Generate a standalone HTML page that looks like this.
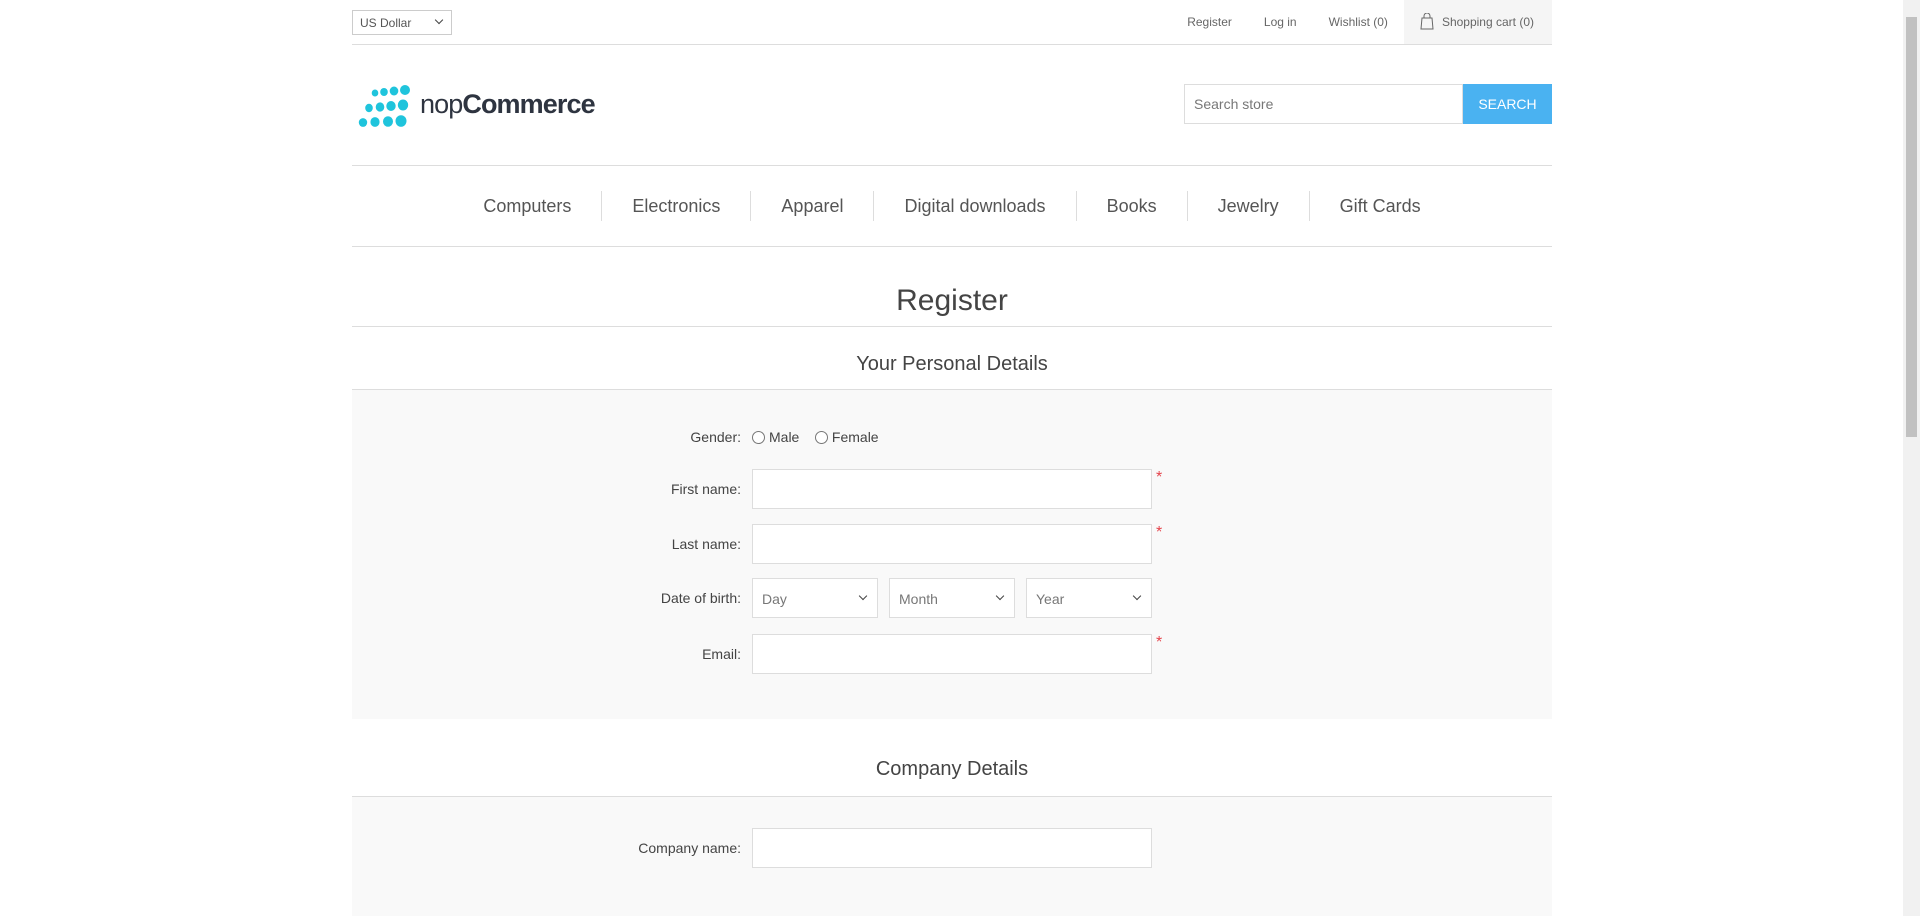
<!DOCTYPE html>
<html><head><meta charset="utf-8"><style>
*{box-sizing:border-box;margin:0;padding:0}
html,body{width:1920px;height:916px;overflow:hidden;background:#fff;font-family:"Liberation Sans",Arial,sans-serif;color:#444}
.sb{position:absolute;right:0;top:0;width:17px;height:916px;background:#f1f1f1}
.sb i{position:absolute;left:3px;top:17px;width:11px;height:420px;background:#c1c1c1}
.wrap{position:absolute;left:352px;width:1200px;top:0;height:916px;overflow:hidden}
.top{height:45px;border-bottom:1px solid #ddd;position:relative}
.cur{position:absolute;left:0;top:10px;width:100px;height:25px;border:1px solid #ccc;font-size:12px;padding:5px 7px;color:#555}
.cur:after{content:"";position:absolute;right:9px;top:6px;width:5px;height:5px;border-right:1.5px solid #444;border-bottom:1.5px solid #444;transform:rotate(45deg)}
.links{position:absolute;right:0;top:0;height:44px;font-size:12px;color:#666;display:flex}
.links span{line-height:44px;margin-left:32px}
.cart{background:#f5f5f5;padding:0 18px 0 38px;position:relative;margin-left:16px!important}
.cart svg{position:absolute;left:16px;top:13px}
.hdr{height:121px;border-bottom:1px solid #ddd;position:relative}
.search{position:absolute;right:0;top:39px;display:flex}
.search div{width:279px;height:40px;border:1px solid #ddd;font-size:14px;color:#777;padding:11px 9px}
.search b{width:89px;height:40px;background:#4ab2f1;color:#fff;font-weight:normal;font-size:14px;text-align:center;line-height:40px}
.nav{height:81px;border-bottom:1px solid #ddd;display:flex;justify-content:center;align-items:center}
.nav span{font-size:18px;color:#555;padding:0 30px;border-left:1px solid #ddd;line-height:30px}
.nav span:first-child{border:0}
h1{font-weight:normal;font-size:30px;color:#444;text-align:center;margin-top:34px;line-height:40px;height:46px;border-bottom:1px solid #ddd}
h2{font-weight:normal;font-size:20px;color:#444;text-align:center;height:63px;padding-top:12px;line-height:50px;border-bottom:1px solid #ddd}
.box{background:#f9f9f9;position:relative}
.row{position:absolute;left:0;width:1200px;height:40px}
.row label{position:absolute;right:811px;top:0;line-height:40px;font-size:14px;color:#444;white-space:nowrap}
.in{position:absolute;left:400px;top:0;width:400px;height:40px;border:1px solid #ddd;background:#fff}
.req{position:absolute;left:804px;top:0;color:#e4434b;font-size:16px}
.sel{position:absolute;top:0;width:126px;height:40px;border:1px solid #ddd;background:#fff;font-size:14px;color:#777;padding:12px 9px}
.sel:after{content:"";position:absolute;right:11px;top:14px;width:5px;height:5px;border-right:1.5px solid #444;border-bottom:1.5px solid #444;transform:rotate(45deg)}
.rad{display:inline-block;width:13px;height:13px;border:1px solid #777;border-radius:50%;vertical-align:-2px;margin-right:4px;background:#fff}
</style></head><body>
<div class="sb"><i></i></div>
<div class="wrap">
 <div class="top"><div class="cur">US Dollar</div>
  <div class="links"><span>Register</span><span>Log in</span><span>Wishlist (0)</span><span class="cart"><svg width="14" height="17" viewBox="0 0 14 17"><path d="M4 5V3a3 3 0 0 1 6 0v2M2 5h10l1 11H1z" fill="none" stroke="#666" stroke-width="1"/></svg>Shopping cart (0)</span></div></div>
 <div class="hdr">
  <svg style="position:absolute;left:2px;top:40px" width="58" height="42" viewBox="0 0 58 42">
   <g fill="#1fc4dc">
   <ellipse cx="51" cy="5" rx="5" ry="5"/><ellipse cx="40" cy="6" rx="4.3" ry="4.5"/><ellipse cx="30" cy="7" rx="3.8" ry="4"/><ellipse cx="21" cy="8" rx="3.3" ry="3.5"/>
   <ellipse cx="49" cy="20" rx="5.2" ry="5.5"/><ellipse cx="37" cy="21" rx="4.7" ry="5"/><ellipse cx="26" cy="22" rx="4.3" ry="4.6"/><ellipse cx="15" cy="23" rx="3.8" ry="4.2"/>
   <ellipse cx="47" cy="36" rx="5.5" ry="5.8"/><ellipse cx="34" cy="36.5" rx="5" ry="5.3"/><ellipse cx="21" cy="37" rx="4.6" ry="4.9"/><ellipse cx="9" cy="37.5" rx="4.2" ry="4.4"/>
   </g></svg>
  <div style="position:absolute;left:68px;top:44px;font-size:27px;color:#2e3440;letter-spacing:-0.9px">nop<b>Commerce</b></div>
  <div class="search"><div>Search store</div><b>SEARCH</b></div>
 </div>
 <div class="nav"><span>Computers</span><span>Electronics</span><span>Apparel</span><span>Digital downloads</span><span>Books</span><span>Jewelry</span><span>Gift Cards</span></div>
 <h1>Register</h1>
 <h2>Your Personal Details</h2>
 <div class="box" style="height:329px">
  <div class="row" style="top:27px"><label>Gender:</label><div style="position:absolute;left:400px;top:0;line-height:40px;font-size:14px;color:#444"><span class="rad"></span>Male&nbsp;&nbsp;&nbsp; <span class="rad"></span>Female</div></div>
  <div class="row" style="top:79px"><label>First name:</label><div class="in"></div><span class="req">*</span></div>
  <div class="row" style="top:134px"><label>Last name:</label><div class="in"></div><span class="req">*</span></div>
  <div class="row" style="top:188px"><label>Date of birth:</label><div class="sel" style="left:400px">Day</div><div class="sel" style="left:537px">Month</div><div class="sel" style="left:674px">Year</div></div>
  <div class="row" style="top:244px"><label>Email:</label><div class="in"></div><span class="req">*</span></div>
 </div>
 <h2 style="height:78px;padding-top:25px;line-height:50px">Company Details</h2>
 <div class="box" style="height:119px">
  <div class="row" style="top:31px"><label>Company name:</label><div class="in"></div></div>
 </div>
</div>
</body></html>
